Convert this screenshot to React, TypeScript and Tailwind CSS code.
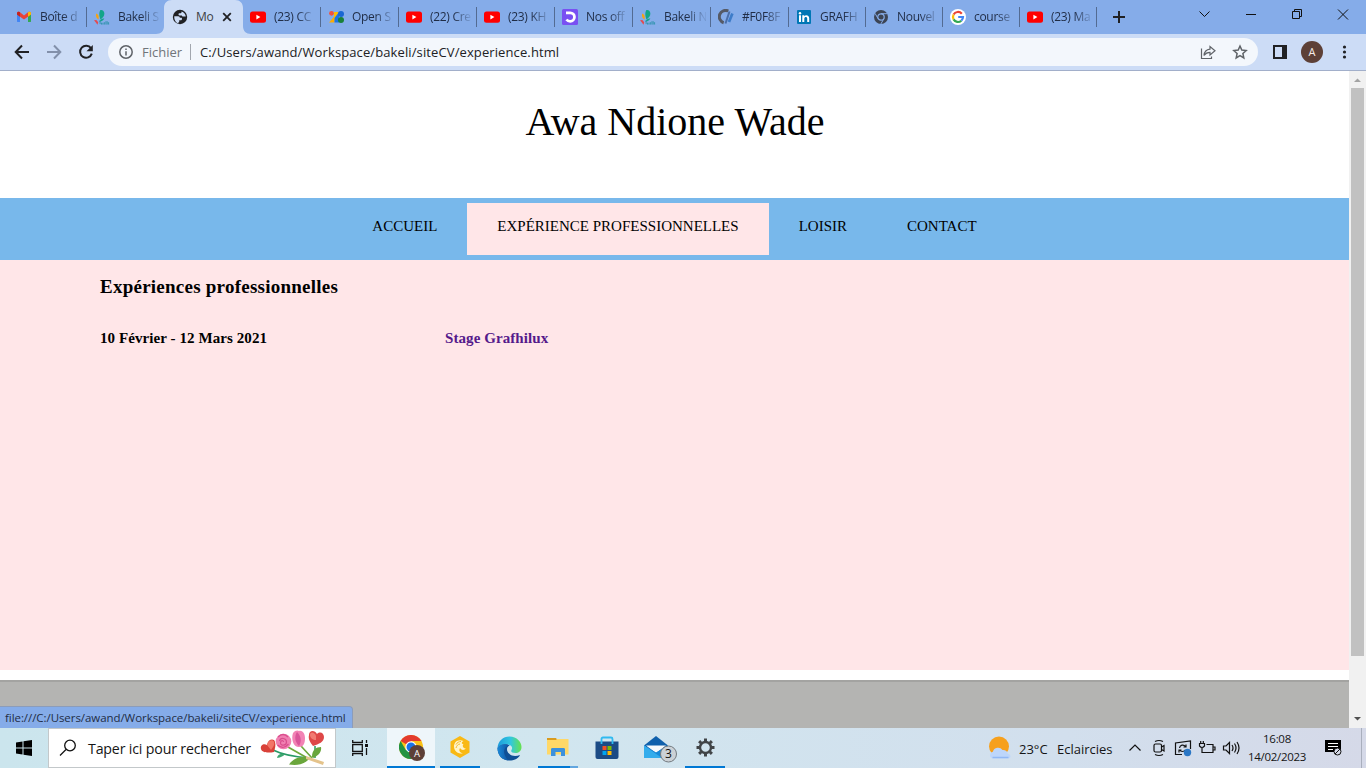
import React from "react";

const UI = "font-['Open_Sans','Noto_Sans',sans-serif]";

const Gmail = () => (
  <svg width="16" height="16" viewBox="0 0 16 16">
    <path d="M1 4v8.200c0 .6.4.9.9.9H4V6.800L1 4Z" fill="#4285f4" />
    <path d="M15 4v8.200c0 .6-.4.9-.9.900H12V6.800L15 4Z" fill="#34a853" />
    <path d="M1 4.200C1 2.800 2.700 2.200 3.700 3L8 6.400 12.300 3C13.300 2.200 15 2.800 15 4.200V5.500L8 10.600 1 5.500Z" fill="#ea4335" />
    <path d="M12 3.300C13.300 2.200 15 2.800 15 4.200V5.500l-3 2.200Z" fill="#fbbc04" />
    <path d="M1 4.200C1 3 2 2.500 3 2.700l1 .6v4.400L1 5.500Z" fill="#c5221f" />
  </svg>
);
const Bakeli = () => (
  <svg width="17" height="17" viewBox="0 0 17 17">
    <path d="M6.800.500C9 0 11 1.500 11 4.500c0 2.500-2 4.500-4 6C5.500 8 5 3 6.800.500Z" fill="#12a589" />
    <path d="M5.500 13C7 10 8.500 9.300 11 9.500c-1 2-3 3.300-5.500 3.500Z" fill="#12a589" />
    <path d="M2.200 4.500c2.300 0 3.300 2.500 2.600 6-2-.8-3.300-3-2.600-6Z" fill="#f6a313" />
    <path d="M0 11.500l2.500-.3 2 2.300-.8 2.700C2.500 14.500 1.500 13 0 11.500Z" fill="#e34b51" />
    <path d="M6.500 11.500v4M8 14v2M9.500 14v2M11 13.500V16M12.700 12.500V16M14 12.500V16M15.500 13.500V16" stroke="#2f93ad" strokeWidth="1" />
  </svg>
);
const Globe = () => (
  <svg width="16" height="16" viewBox="0 0 16 16">
    <circle cx="8" cy="8" r="7.200" fill="#202124" />
    <path d="M2.300 7.200h3.900c1.300 0 1.600.8 1.600 1.600h1.300c.6 0 .9.5.9.9 0 1-.6 1.500-1.500 1.500H7.200v1.500c0 .6-.3.8-.9.8v1C3.800 13.500 2 10.500 2.300 7.200Z" fill="#ccdcf6" />
    <path d="M9.500 2.400c2.500.6 4.200 2.700 4.300 5.200h-2.600c-.8 0-1.300-.5-1.300-1.200H7.500c-.7 0-1-.5-1-1.100 0-.8.5-1.100 1.100-1.100h1c.6 0 .9-.4.9-.9Z" fill="#ccdcf6" />
  </svg>
);
const YouTube = () => (
  <svg width="16" height="16" viewBox="0 0 16 16">
    <rect y="2.400" width="16" height="11.400" rx="2.500" fill="#f00" />
    <path d="M6.400 5.700v4.700l4-2.350Z" fill="#fff" />
  </svg>
);
const OpenC = () => (
  <svg width="16" height="16" viewBox="0 0 16 16">
    <circle cx="3.500" cy="4.300" r="2.400" fill="#f0523d" />
    <path d="M1 13.500 6.500 7v6.500Z" fill="#fbac04" />
    <path d="M6 3h5v5L6 11.500Z" fill="#fbbc04" />
    <path d="M6.500 13.500V9L11 3v10.500Z" fill="#1a73e8" />
    <circle cx="13" cy="5" r="3" fill="#1967d2" />
    <circle cx="13" cy="11" r="3" fill="#188038" />
  </svg>
);
const PurpleD = () => (
  <svg width="16" height="16" viewBox="0 0 16 16">
    <rect width="16" height="16" rx="1.500" fill="#7950f2" />
    <path d="M4 3.800h4.200a4.200 4.200 0 0 1 0 8.500c-1.700 0-2.900-.7-3.700-1.800" fill="none" stroke="#fff" strokeWidth="2.800" />
  </svg>
);
const ColorHex = () => (
  <svg width="16" height="16" viewBox="0 0 16 16" fill="none">
    <path d="M10.300 2A6.300 6.300 0 1 0 5.700 13.700" stroke="#555a66" strokeWidth="3" />
    <path d="M11.500 2.500 7.500 14.500" stroke="#4a6ea8" strokeWidth="2" />
    <path d="M14.400 4.500 11 13" stroke="#3d7cc9" strokeWidth="2.700" />
  </svg>
);
const LinkedIn = () => (
  <svg width="14" height="14" viewBox="0 0 14 14" className="ml-px">
    <rect width="14" height="14" rx="1" fill="#0077b5" />
    <path d="M2 5.300h2V12H2ZM5.300 5.300h2v.9c1.200-1.800 4.900-1.400 4.900 2V12h-2V8.500c0-2.200-2.900-2-2.900 0V12h-2Z" fill="#fff" />
    <circle cx="3" cy="3.200" r="1.200" fill="#fff" />
  </svg>
);
const ChromeMono = () => (
  <svg width="16" height="16" viewBox="0 0 16 16">
    <circle cx="8" cy="8" r="7" fill="#3c4454" />
    <circle cx="8" cy="8" r="3.200" fill="#3c4454" stroke="#85ace9" strokeWidth="1.200" />
    <path d="M8 4.700h6.300M5.100 9.700 2 4.300M10.900 9.700 7.800 15" stroke="#85ace9" strokeWidth="1" />
  </svg>
);
const GoogleG = () => (
  <svg width="16" height="16" viewBox="0 0 16 16" fill="none" strokeWidth="2.200">
    <circle cx="8" cy="8" r="8" fill="#fff" />
    <path d="M11.800 4.700A5 5 0 0 0 3.600 5.600" stroke="#ea4335" />
    <path d="M3.600 5.600a5 5 0 0 0 0 4.800" stroke="#fbbc05" />
    <path d="M3.600 10.400a5 5 0 0 0 7.700 1.300" stroke="#34a853" />
    <path d="M11.300 11.700A5 5 0 0 0 13 8H8.200" stroke="#4285f4" />
  </svg>
);

const tabs: { label: string; icon: React.ReactNode; w: string; sep: boolean; active?: boolean }[] = [
  { label: "Boîte d", icon: <Gmail />, w: "w-[78px]", sep: false },
  { label: "Bakeli S", icon: <Bakeli />, w: "w-[78px]", sep: true },
  { label: "Mo", icon: <Globe />, w: "w-[78px]", sep: false, active: true },
  { label: "(23) CC", icon: <YouTube />, w: "w-[78px]", sep: false },
  { label: "Open S", icon: <OpenC />, w: "w-[78px]", sep: true },
  { label: "(22) Cre", icon: <YouTube />, w: "w-[78px]", sep: true },
  { label: "(23) KH", icon: <YouTube />, w: "w-[78px]", sep: true },
  { label: "Nos off", icon: <PurpleD />, w: "w-[78px]", sep: true },
  { label: "Bakeli N", icon: <Bakeli />, w: "w-[78px]", sep: true },
  { label: "#F0F8F", icon: <ColorHex />, w: "w-[78px]", sep: true },
  { label: "GRAFH", icon: <LinkedIn />, w: "w-[77px]", sep: true },
  { label: "Nouvel", icon: <ChromeMono />, w: "w-[77px]", sep: true },
  { label: "course", icon: <GoogleG />, w: "w-[77px]", sep: true },
  { label: "(23) Ma", icon: <YouTube />, w: "w-[77px]", sep: true },
];

function TabStrip() {
  return (
    <div className="flex h-[34px] bg-[#85ace9] pl-2 text-[#1f2c45]">
      {tabs.map((t, i) => (
        <div key={i} className={`relative flex h-[34px] shrink-0 items-center ${t.w}`}>
          {t.active && (
            <svg className="absolute -left-2 top-0" width="96" height="34">
              <path d="M0 34c5 0 8-3 8-8V8c0-5 3-8 8-8h63c5 0 8 3 8 8v18c0 5 3 8 8 8Z" fill="#ccdcf6" />
            </svg>
          )}
          {t.sep && <div className="absolute left-0 top-[7px] h-5 w-px bg-[#536b92]" />}
          <div className="relative ml-2 flex h-[17px] w-4 shrink-0 items-center">{t.icon}</div>
          <div
            className={`relative ml-2 whitespace-nowrap text-[12px] leading-5 tracking-[-0.3px] ${
              t.active ? "w-5 text-[#3c4043]" : "w-[42px] [mask-image:linear-gradient(90deg,#000_55%,rgba(0,0,0,0.15)_95%)]"
            }`}
          >
            {t.label}
          </div>
          {t.active && (
            <svg className="relative ml-[6px]" width="10" height="10" stroke="#202124" strokeWidth="1.800">
              <path d="m1.200 1.200 7.600 7.600M8.800 1.200 1.200 8.800" />
            </svg>
          )}
        </div>
      ))}
      <div className="flex h-[34px] w-[45px] shrink-0 items-center">
        <div className="h-5 w-px bg-[#536b92]" />
        <svg className="ml-4" width="12" height="12" stroke="#202124" strokeWidth="2">
          <path d="M6 0v12M0 6h12" />
        </svg>
      </div>
      <svg className="ml-[55px] shrink-0" width="160" height="34" fill="none" stroke="#111" strokeWidth="1">
        <path d="m3.500 11.500 5 5 5-5M50 14.500h10M96.500 11.500h7v7h-7ZM98.500 11.500v-2h7v7h-2M142 9.500l10 10M152 9.500l-10 10" />
      </svg>
    </div>
  );
}

function Toolbar() {
  return (
    <div className="flex h-[37px] items-center border-b border-[#a2afca] bg-[#ccdcf6]">
      <svg width="108" height="36" className="shrink-0" fill="none" stroke="#202124" strokeWidth="2">
        <path d="M29 18H16M22 11.500 15.700 18l6.300 6.500" />
        <path d="M47 18h13M54 11.500l6.300 6.500-6.300 6.500" stroke="#8290aa" />
        <path d="M91 14.200a6 6 0 1 0 .8 5.500" />
        <path d="M92.800 11v6.200h-6.300Z" fill="#202124" stroke="none" />
      </svg>
      <div className="flex h-7 w-[1150px] shrink-0 items-center rounded-full bg-[#f3f7fc]">
        <svg width="14" height="14" className="ml-[11px]" fill="none" stroke="#5f6368" strokeWidth="1.500">
          <circle cx="7" cy="7" r="6.200" />
          <path d="M7 6.300v4.200M7 3.400v1.600" />
        </svg>
        <span className="ml-[9px] w-[42px] whitespace-nowrap text-[13px] leading-5 text-[#70757a]">Fichier</span>
        <div className="ml-[6px] h-4 w-px bg-[#a2a7ae]" />
        <span className="ml-[9px] whitespace-nowrap text-[13px] leading-5 tracking-[0.110px] text-[#202124]">
          C:/Users/awand/Workspace/bakeli/siteCV/experience.html
        </span>
        <svg className="ml-auto mr-[9px]" width="50" height="20" fill="none" stroke="#5f6368" strokeWidth="1.200">
          <path d="M2.500 6.500v10h10v-2M5 13.500c.4-4.200 2.800-6 6-6.300V4.500l5 4.300-5 4.200v-2.700c-2.700 0-4.500 1-6 3.200Z" />
          <path d="m41 4 1.800 4 4.400.5-3.300 3 .9 4.400-3.800-2.300-3.800 2.300.9-4.400-3.300-3 4.400-.5Z" strokeWidth="1.500" />
        </svg>
      </div>
      <svg className="ml-[14px]" width="16" height="16">
        <path d="M2 2h12v12H2Z" fill="none" stroke="#202124" strokeWidth="2" />
        <path d="M10 2h4v12h-4Z" fill="#202124" />
      </svg>
      <div className="ml-[13px] flex size-[22px] items-center justify-center rounded-full bg-[#5d4037] text-[11px] text-[#f5ece8]">A</div>
      <svg className="ml-[18px]" width="6" height="14" fill="#202124">
        <circle cx="3.500" cy="2" r="1.600" /><circle cx="3.500" cy="7" r="1.600" /><circle cx="3.500" cy="12" r="1.600" />
      </svg>
    </div>
  );
}

function WebPage() {
  return (
    <div className="flex h-[657px]">
      <div className="relative flex w-[1349px] flex-col overflow-hidden bg-white font-['Liberation_Serif',serif] text-black">
        <h1 className="h-[127px] shrink-0 pl-px pt-[28px] text-center text-[40px] leading-[46px]">Awa Ndione Wade</h1>
        <nav className="flex h-[62px] shrink-0 justify-center bg-[#78b8eb] py-[5px] text-[15px] leading-[17px]">
          {["ACCUEIL", "EXPÉRIENCE PROFESSIONNELLES", "LOISIR", "CONTACT"].map((n, i) => (
            <a key={n} className={`h-[52px] px-[30px] pt-[15px] ${i === 1 ? "bg-[#ffe6e8]" : ""}`}>{n}</a>
          ))}
        </nav>
        <main className="h-[410px] shrink-0 bg-[#ffe6e8] px-[100px] font-bold">
          <h3 className="pt-[16px] text-[19px] leading-[22px] tracking-[0.240px]">Expériences professionnelles</h3>
          <div className="mt-[32px] flex text-[15px] leading-[17px] tracking-[0.080px]">
            <span className="w-[345px]">10 Février - 12 Mars 2021</span>
            <a className="text-[#551a8b]">Stage Grafhilux</a>
          </div>
        </main>
        <footer className="mt-[10px] h-12 shrink-0 border-t-2 border-[#a3a3a1] bg-[#b4b4b2]" />
        <div className={`absolute bottom-0 left-0 h-[22px] w-[353px] whitespace-nowrap rounded-tr border-r border-t border-[#8b9cba] bg-[#85ace9] pl-[5px] text-[11.500px] leading-[22px] tracking-[-0.060px] text-[#1f2c45] ${UI}`}>
          file:///C:/Users/awand/Workspace/bakeli/siteCV/experience.html
        </div>
      </div>
      <div className="flex w-[17px] flex-col items-center bg-[#f1f1f1]">
        <svg width="17" height="17"><path d="M5 11h7L8.500 7.500Z" fill="#a3a3a3" /></svg>
        <div className="h-[568px] w-[13px] bg-[#c1c1c1]" />
        <svg className="mt-auto" width="17" height="17"><path d="M5 6h7L8.500 9.500Z" fill="#505050" /></svg>
      </div>
    </div>
  );
}

const Bouquet = () => (
  <svg width="68" height="36" viewBox="0 0 68 36">
    <path d="M13 20q12 6 36 8M55 16v12" fill="none" stroke="#279a66" strokeWidth="1.500" />
    <path d="M28 17 49 29M41 16 52 28" fill="none" stroke="#6fa83c" strokeWidth="1.700" />
    <path d="M29 34.500c5-7 12-9 21-6.500-5 6-12 8-21 6.500ZM52 27c0-7 4-10 9-10 1 5-3 9-8 11Z" fill="#6aa63c" />
    <path d="M17 28q1-5 8-4-2 3-8 4Z" fill="#3da56f" />
    <path d="m46 26 18 6-1 3-17-6Z" fill="#e4c38b" />
    <path d="M1 19c-1-4 3-6 6-4 1-6 7-7 8-3 1 3 0 6-1 10-5 1-12 1-13-3Z" fill="#d94139" />
    <path d="M7 15c1-5 6-6 7-3 1 3-1 5-3 8Z" fill="#f27568" />
    <circle cx="23.500" cy="11.500" r="7.800" fill="#f080b2" />
    <path d="M19.500 11c1-4 7-3 7 1s-6 4-6 1 3-3 3-1M17.500 15q6 5 11-1M18 7q5-5 10 0" fill="none" stroke="#d94d8d" strokeWidth="1.200" />
    <path d="M33 3c2-3 5-3 6-2 3-1 6 2 6 7 0 6-2 9-6 9-6 0-8-8-6-14Z" fill="#f283b5" />
    <path d="M37 2c4 4 5 9 2 14-4-4-5-9-2-14Z" fill="#d9569a" />
    <path d="M49 5c0-5 6-5 8-1 3-3 7-1 7 3 0 5-5 7-11 9-3-4-5-7-4-11Z" fill="#de4747" />
    <path d="M50 5c0-4 5-3 6 1v4c-3 0-6-2-6-5Z" fill="#f27a71" />
  </svg>
);

const ChromeApp = () => (
  <svg width="28" height="28" viewBox="0 0 28 28">
    <circle cx="12" cy="12" r="12" fill="#fbc116" />
    <path d="M12 12 1.600 6A12 12 0 0 1 22.400 6H12Z" fill="#e33b2e" />
    <path d="M1.600 6A12 12 0 0 0 12 24l5.200-9-10.400 0Z" fill="#229342" />
    <circle cx="12" cy="12" r="5.700" fill="#fff" /><circle cx="12" cy="12" r="4.500" fill="#1a73e8" />
    <circle cx="18" cy="18" r="8" fill="#5d4037" />
    <text x="18" y="21.500" textAnchor="middle" fontFamily="Open Sans" fontSize="9.500" fill="#fff">A</text>
  </svg>
);
const HexApp = () => (
  <svg width="20" height="24" viewBox="0 0 20 24">
    <path d="m10 1 9.500 5.500v11L10 23 .500 17.500v-11Z" fill="#f9b914" />
    <path d="M13.500 6C8 3.500 4 7 4 11.500S7.500 19 13 18.500c-3.500-1-4.500-3-3-5.500 1.500 2.500 4 2.500 6 .5-3 0-4-2.500-2.500-4.500-2 0-2.500-1.500 0-3Z" fill="#fff4c8" />
    <path d="M6 9.500c1-2 3-3 5-3M6 13c.5-2 2-4 4-4" fill="none" stroke="#f3bb2c" />
  </svg>
);
const EdgeApp = () => (
  <svg width="25" height="25" viewBox="0 0 25 25">
    <defs>
      <linearGradient id="eg" x2="1"><stop stopColor="#1b9bdc" /><stop offset=".55" stopColor="#32c7df" /><stop offset="1" stopColor="#66e24c" /></linearGradient>
      <linearGradient id="eb" x2="1"><stop stopColor="#1b8ad8" /><stop offset="1" stopColor="#0c4f9f" /></linearGradient>
    </defs>
    <path d="M.500 12C1 5 6 .500 12.500.500 20 .500 24.500 6 24.500 11c0 4-3 6-6 6-3.500 0-5-1.300-4-3 1.300-2 .500-4-2-5C9 7.500 3 8 .500 12Z" fill="url(#eg)" />
    <path d="M.500 12C3 8 9 7.500 12.500 9.500 9 11 9.500 15 12 17.500c3 3 7 3 11 1.500-2 4-6 5.500-10.500 5.500C5 24.500.500 19 .500 12Z" fill="#0e4f96" />
    <path d="M.500 12C2.500 8 9 7 12.500 9.500c-6 1-8 8-1 15C5 24 .500 19 .500 12Z" fill="url(#eb)" />
  </svg>
);
const FolderApp = () => (
  <svg width="22" height="20" viewBox="0 0 22 20">
    <path d="M0 1h9l2 3H0Z" fill="#d99b1e" />
    <path d="M0 3h9l1-1h11.500v15.500H0Z" fill="#ffd867" />
    <path d="M4 19v-6.500c0-1 .5-1.500 1.500-1.500h11c1 0 1.500.5 1.500 1.500V19h-4v-4H8.500v4Z" fill="#3c91dc" />
  </svg>
);
const StoreApp = () => (
  <svg width="24" height="24" viewBox="0 0 24 24">
    <path d="M.500 5.500h23V21a2 2 0 0 1-2 2h-19a2 2 0 0 1-2-2Z" fill="#1c4b85" />
    <path d="M6.500 8V3c0-1 .5-1.500 1.500-1.500h8c1 0 1.500.5 1.500 1.500v5" fill="none" stroke="#30baf0" strokeWidth="1.800" />
    <path d="M7.500 10h4v4h-4Z" fill="#f25022" /><path d="M12.500 10h4v4h-4Z" fill="#7fba00" />
    <path d="M7.500 15h4v4h-4Z" fill="#00a4ef" /><path d="M12.500 15h4v4h-4Z" fill="#ffb900" />
  </svg>
);
const MailApp = () => (
  <svg width="34" height="28" viewBox="0 0 34 28">
    <path d="m0 10.500 12-9.500 12 9.500-12 8Z" fill="#0f60ac" />
    <path d="M2 10.500h20l-10 7.500Z" fill="#f7fafc" />
    <path d="m0 10.500 12 7 12-7V23H0Z" fill="#1689d8" />
    <path d="m0 10.500 18 12.500H0Z" fill="#33acec" />
    <circle cx="24.500" cy="19" r="8" fill="#cbd1d6" stroke="#737a80" />
    <text x="24.500" y="23.300" textAnchor="middle" fontFamily="Open Sans" fontSize="12" fill="#111">3</text>
  </svg>
);
const Gear = () => (
  <svg width="19" height="19" viewBox="-9.500 -9.500 19 19" fill="none" stroke="#414447">
    <circle r="5.500" strokeWidth="2.400" />
    {[0, 45, 90, 135, 180, 225, 270, 315].map((a) => (
      <path key={a} d="M0-6v-3" strokeWidth="3" transform={`rotate(${a})`} />
    ))}
  </svg>
);

function Taskbar() {
  return (
    <div className="flex h-10 items-center bg-[linear-gradient(90deg,#cbe5ed_0%,#d1e6ef_40%,#d2dfed_78%,#d5d9e8_100%)] text-[#151515]">
      <div className="flex h-10 w-12 items-center justify-center">
        <svg width="16" height="16"><path d="M0 2.400 6.500 1.500v6H0ZM7.500 1.300 16 0v7.500H7.500ZM0 8.500h6.500v6L0 13.600ZM7.500 8.500H16V16l-8.500-1.300Z" /></svg>
      </div>
      <div className="flex h-10 w-72 shrink-0 items-center border border-[#c3c8ca] bg-white">
        <svg className="ml-[10px]" width="18" height="18" fill="none" stroke="#111" strokeWidth="1.300"><circle cx="11" cy="6.500" r="5.300" /><path d="M7 10.500 1 16.500" /></svg>
        <span className="ml-[11px] w-[172px] whitespace-nowrap pt-px text-[14.200px] leading-5 tracking-[-0.170px]">Taper ici pour rechercher</span>
        <Bouquet />
      </div>
      <svg className="ml-4 shrink-0" width="16" height="16" fill="none" stroke="#111" strokeWidth="1.300">
        <path d="M.7 0v2.500h9.600V0M.7 16v-2.500h9.600V16M.7 4.700h9.600v6.600H.7ZM14.500 0v3M14.500 8v7" /><path d="M13 4h3v3h-3Z" fill="#111" stroke="none" />
      </svg>
      <div className="ml-[19px] flex h-10 w-12 shrink-0 items-center justify-center border-b-2 border-[#0078d4] bg-[#eef6fa] pl-1 pt-[4px]"><ChromeApp /></div>
      <div className="ml-[5px] flex h-10 w-10 shrink-0 items-center justify-center border-b-2 border-[#0078d4]"><HexApp /></div>
      <div className="flex h-10 w-[58px] shrink-0 items-center justify-center"><EdgeApp /></div>
      <div className="relative flex h-10 w-10 shrink-0 items-center justify-center border-b-2 border-[#0078d4]"><FolderApp /><div className="absolute -bottom-[2px] right-0 h-[2px] w-2 bg-[#62a6df]" /></div>
      <div className="flex h-10 w-[57px] shrink-0 items-center justify-center"><StoreApp /></div>
      <div className="ml-[9px] flex h-10 w-[41px] shrink-0 items-center pt-[2px]"><MailApp /></div>
      <div className="flex h-10 w-10 shrink-0 items-center justify-center border-b-2 border-[#0078d4]"><Gear /></div>
      <svg className="ml-[263px] shrink-0" width="24" height="24" viewBox="0 0 24 24">
        <circle cx="11" cy="10.500" r="10" fill="#f6a01d" />
        <path d="M4.500 22.500a3.500 3.500 0 0 1 .3-6.800 5.500 5.500 0 0 1 9.700-1.700 4.500 4.500 0 0 1 5.300 3.700c3.500.5 3.700 4.800.2 4.800Z" fill="#bdd6fb" />
        <path d="M4.500 21.500h16" stroke="#91b8f5" strokeWidth="1.500" />
      </svg>
      <span className="ml-[7px] w-[38px] whitespace-nowrap pt-px text-[13px] leading-5">23°C</span>
      <span className="w-[72px] whitespace-nowrap pt-px text-[13px] leading-5">Eclaircies</span>
      <svg className="shrink-0" width="112" height="24" fill="none" stroke="#111" strokeWidth="1.200">
        <path d="m.5 14.500 5.500-5.500 5.500 5.500" />
        <path d="M26 5.500q4-2 8 0M26 18.500q4 2 8 0" /><rect x="25" y="8" width="7.500" height="8" rx="1.500" /><path d="m32.500 11 2.500-1.500v5.500l-2.500-1.500" />
        <path d="M53 18.500h-6.500V7L61.500 5v8M50.500 12c.5-3 4-4 6-1.500M57 8.500v2.500h-2.500M56 14c-1 2-4 2-5.500 0M50 16.500V14h2.500" /><circle cx="58.500" cy="16.500" r="3.700" fill="#2b77c5" stroke="none" />
        <path d="M77.500 8.500H84v8h-8.500M84.500 11h1.500v3h-1.500M70.500 7.500h5V10q-2.500 3-5 0ZM71.700 5v2.500M74.300 5v2.500M73 12v4.500h2.500" />
        <path d="M94.500 10H97l3.500-3.500v11L97 14h-2.500ZM103 9q2 3 0 6M105.500 7.500q3 4.500 0 9M108 6q4 6 0 12" />
      </svg>
      <div className="ml-[4px] w-[64px] shrink-0 whitespace-nowrap text-center text-[11.500px] leading-[18px] tracking-[-0.300px]"><div>16:08</div><div>14/02/2023</div></div>
      <svg className="ml-[16px] shrink-0" width="18" height="18">
        <path d="M0 1h16v12h-4v3l-3-3H0Z" /><path d="M3 4.500h10M3 7.500h10M3 10.500h5" stroke="#fff" strokeWidth="1.200" />
        <circle cx="12.500" cy="12.500" r="3.500" fill="#d5d9e8" stroke="#111" /><path d="m10 15 5-5" stroke="#111" />
      </svg>
      <div className="ml-auto mr-[4px] h-10 w-px bg-[#a9afbd]" />
    </div>
  );
}

export default function App() {
  return (
    <div className={`h-[768px] w-[1366px] overflow-hidden ${UI}`}>
      <TabStrip />
      <Toolbar />
      <WebPage />
      <Taskbar />
    </div>
  );
}
